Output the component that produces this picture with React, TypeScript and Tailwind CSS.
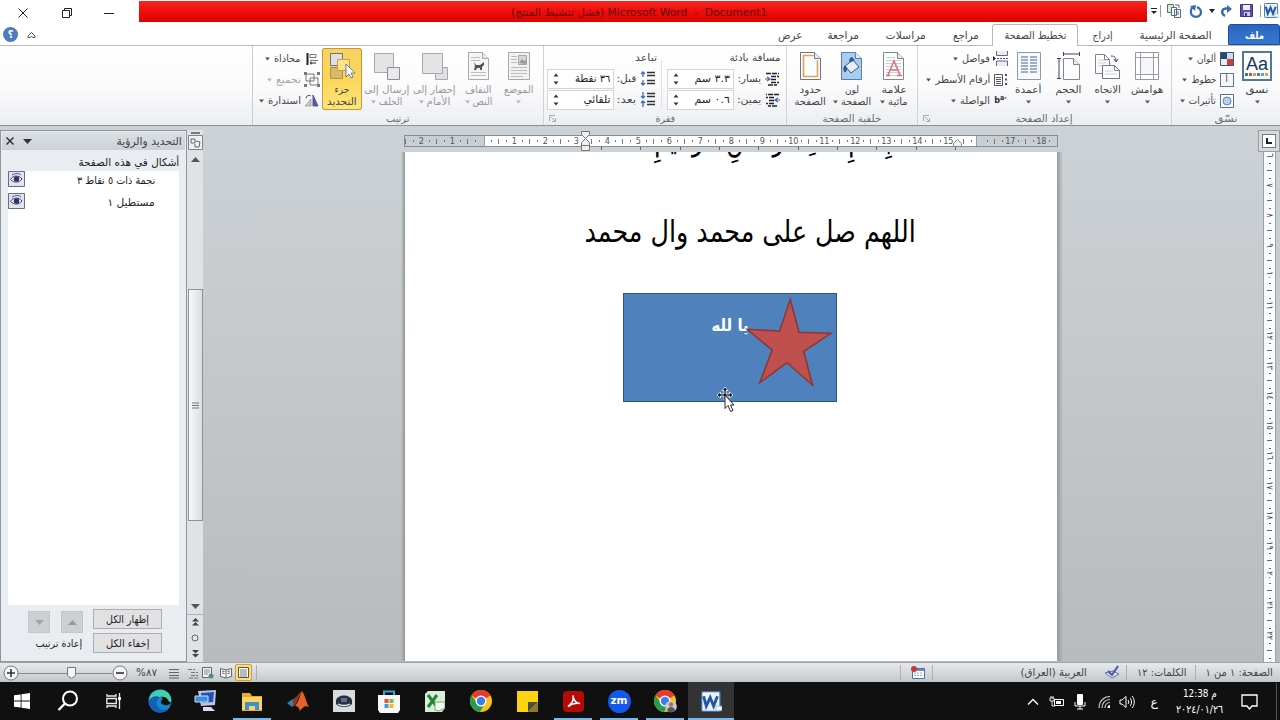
import { useLayoutEffect, useRef, useState, type ReactNode } from "react";
import clsx from "clsx";

// Arabic label squeezed or stretched to a fixed width
function Label({ w, children, className = "", dir = "rtl" }: { w: number; children: ReactNode; className?: string; dir?: string }) {
  const ref = useRef<HTMLSpanElement>(null);
  const [scale, setScale] = useState(1);
  useLayoutEffect(() => {
    if (ref.current) setScale(w / ref.current.offsetWidth);
  }, [w]);
  return (
    <span className={clsx("inline-flex shrink-0 justify-center", className)} style={{ width: w }}>
      <span ref={ref} dir={dir} className="inline-block shrink-0 whitespace-nowrap" style={{ transform: `scaleX(${scale})` }}>
        {children}
      </span>
    </span>
  );
}

function Caret({ dim }: { dim?: boolean }) {
  return (
    <svg width="5" height="4" viewBox="0 0 5 4" className="shrink-0">
      <path d="M0 .5h5L2.5 3.5z" fill={dim ? "#b5b5b8" : "#555"} />
    </svg>
  );
}

function Svg({ w = 16, h = w, box, children, className }: { w?: number; h?: number; box?: string; children: ReactNode; className?: string }) {
  return (
    <svg width={w} height={h} viewBox={box ?? `0 0 ${w} ${h}`} fill="none" className={clsx("shrink-0", className)}>
      {children}
    </svg>
  );
}

/* ---------- title bar ---------- */

function WordLogo({ s = 16 }: { s?: number }) {
  return (
    <Svg w={s} box="0 0 16 16">
      <rect x=".5" y=".5" width="14" height="15" rx="1" fill="#e9f1fb" stroke="#3e6cb0" />
      <path d="M2 4l2 7.500L7 5l2.600 6.500L12.500 4" stroke="#2456a6" strokeWidth="2.200" />
      <path d="M11.500 11.500H16v3.500h-4.500z" fill="#f7faff" stroke="#7d9fd0" strokeWidth=".5" />
    </Svg>
  );
}

function TitleBar() {
  return (
    <div className="flex h-6 shrink-0 items-start bg-white">
      <div className="flex h-6 w-[139px] shrink-0 items-center pt-[2px] pl-[17px]">
        <Svg w={12}><path d="M1.500 1.500l9 9m0-9l-9 9" stroke="#222" /></Svg>
        <Svg w={12} className="ml-[32px]">
          <path d="M1.500 3.500h7v7h-7zM3.500 3V1.500h7v7H9" stroke="#222" />
        </Svg>
        <Svg w={12} className="ml-[30px]"><path d="M1 6.500h10" stroke="#222" /></Svg>
      </div>
      <div className="mt-px flex h-[21px] w-[1008px] shrink-0 items-center justify-center bg-linear-to-b from-[#f6241f] via-[#ee0d0b] to-[#dd0300] pt-[2px] text-[11px] text-[#650b08]">
        <Label w={256} dir="ltr" className="mr-[8px]">(فشل تنشيط المنتج) Microsoft Word &nbsp;-&nbsp; Document1</Label>
      </div>
      <div className="flex h-[21px] flex-1 items-center pl-[3px]">
        <Svg w={8}><path d="M1 1.500h6" stroke="#222" /><path d="M1 4h6L4 7z" fill="#222" /></Svg>
        <div className="ml-[2px] h-3 w-px bg-[#999]" />
        <Svg w={16} className="ml-[5px]">
          <path d="M1.500 1.500h6v8h-6z" fill="#dbe9d8" stroke="#54785a" />
          <path d="M5.500 4.500h5v8h-5zM8.500 6.500h6v8h-6z" fill="#fff" stroke="#586a7e" />
          <path d="M9 2h4v3M10 9h3M10 11h3" stroke="#586a7e" />
        </Svg>
        <Svg w={14} className="ml-[7px]">
          <path d="M4 3C1 5 1 10 4 12c4 2 8 0 8-4 0-3-2-4-4-5" stroke="#3c68b5" strokeWidth="2.200" />
          <path d="M1 2l6-1-1 6z" fill="#3c68b5" />
        </Svg>
        <Svg w={6} h={4} className="ml-[6px]"><path d="M0 0h6L3 4z" fill="#222" /></Svg>
        <Svg w={13} className="ml-[5px]">
          <path d="M5 12C0 9 2 3 9 5" stroke="#3c68b5" strokeWidth="2.400" />
          <path d="M7 1l5 4-5 4z" fill="#3c68b5" />
        </Svg>
        <Svg w={13} className="ml-[7px]">
          <path d="M.5.5h12v12H.5z" fill="#5f50a0" stroke="#41337e" />
          <path d="M3 1h7v5H3z" fill="#eef" /><path d="M4 8h6v4H4z" fill="#cfcbe6" /><path d="M5 9h2v3H5z" fill="#41337e" />
        </Svg>
        <div className="ml-[7px] h-3 w-px bg-[#999]" />
        <div className="ml-[3px]"><WordLogo s={15} /></div>
      </div>
    </div>
  );
}

function TabRow() {
  const tabs = [
    { t: "عرض", w: 24, cell: 49 },
    { t: "مراجعة", w: 31, cell: 57 },
    { t: "مراسلات", w: 40, cell: 67 },
    { t: "مراجع", w: 26, cell: 53 },
  ];
  return (
    <div className="flex h-[22px] shrink-0 border-b border-[#b4b9bf] bg-white text-[10.5px] text-[#444]">
      <div className="flex w-[766px] items-center pl-[3px]">
        <div className="-mt-px flex h-[15px] w-[15px] items-center justify-center rounded-full bg-[#4b7cc1] text-[11px] font-bold text-white">؟</div>
        <Svg w={9} h={8} className="ml-[9px]"><path d="M1 5l3.500-3.500L8 5v1.500H6l-1.500-1-1.500 1H1z" stroke="#555" /></Svg>
      </div>
      {tabs.map((tab) => (
        <div key={tab.t} className="flex shrink-0 items-center justify-center pt-px" style={{ width: tab.cell }}>
          <Label w={tab.w}>{tab.t}</Label>
        </div>
      ))}
      <div className="-mb-px flex w-[86px] items-center justify-center rounded-t-[3px] border border-b-0 border-[#b4b9bf] bg-white">
        <Label w={62}>تخطيط الصفحة</Label>
      </div>
      <div className="flex w-[49px] items-center justify-center pt-px"><Label w={20}>إدراج</Label></div>
      <div className="flex w-[97px] items-center justify-center pt-px"><Label w={72}>الصفحة الرئيسية</Label></div>
      <div className="ml-[4px] flex flex-1 items-center justify-center rounded-t-[3px] border border-[#1d4c9c] bg-linear-to-b from-[#2c66bd] to-[#3577d2] pt-px font-bold text-white">
        <Label w={19}>ملف</Label>
      </div>
    </div>
  );
}

/* ---------- ribbon ---------- */

function Group({ w, title, titleW, children, launcher, last }: { w: number; title: string; titleW: number; children: ReactNode; launcher?: boolean; last?: boolean }) {
  return (
    <div className={clsx("flex shrink-0 flex-col", !last && "border-r border-[#d0d3d7]")} style={{ width: w }}>
      <div className="flex h-[65px] pt-[2px]">{children}</div>
      <div className="flex h-[14px] items-center pt-px text-[10px] text-[#666b72]">
        <div className="w-[16px] pl-[5px]">
          {launcher && <Svg w={7}><path d="M.5 6V.5H6M3 6.500h3.500V3M2 2l4 4" stroke="#999" strokeWidth=".8" /></Svg>}
        </div>
        <div className="flex flex-1 justify-center pr-[16px]"><Label w={titleW}>{title}</Label></div>
      </div>
    </div>
  );
}

function BigButton({ w, icon, l1, w1, l2, w2, caret = true, dim, active }: { w: number; icon: ReactNode; l1: string; w1: number; l2?: string; w2?: number; caret?: boolean; dim?: boolean; active?: boolean }) {
  return (
    <div
      className={clsx(
        "flex h-[62px] shrink-0 flex-col items-center text-[10px] leading-[12px]",
        dim ? "text-[#98989c]" : "text-[#444]",
        active && "rounded-[3px] bg-linear-to-b from-[#f8d263] via-[#fbd65a] to-[#ffe57c] ring-1 ring-[#c29a3c] ring-inset"
      )}
      style={{ width: w }}
    >
      <div className="flex h-[36px] items-center justify-center">{icon}</div>
      <Label w={w1}>{l1}</Label>
      <div className="flex h-3 items-center justify-center gap-[3px]">
        {caret && <Caret dim={dim} />}
        {l2 && <Label w={w2 ?? 20}>{l2}</Label>}
      </div>
    </div>
  );
}

function SmallButton({ t, w, icon, dim }: { t: string; w: number; icon: ReactNode; dim?: boolean }) {
  return (
    <div className={clsx("flex h-[21px] items-center justify-end text-[10px]", dim ? "text-[#a3a3a6]" : "text-[#444]")}>
      <Caret dim={dim} />
      <Label w={w} className="ml-[4px]">{t}</Label>
      <span className="ml-[3px] flex w-[15px] justify-center">{icon}</span>
    </div>
  );
}

function Spin({ value, w }: { value: string; w: number }) {
  return (
    <div className="flex h-[20px] w-[67px] items-center justify-between border border-[#d3d6da] bg-white pr-[3px] pl-[5px] text-[10.5px] text-[#222]">
      <Svg w={6} h={12}><path d="M.5 3.500h5L3 .500zM.500 8.500h5L3 11.500z" fill="#333" /></Svg>
      <Label w={w}>{value}</Label>
    </div>
  );
}

// Sheet of paper with a folded corner, shared by several ribbon icons
function Sheet({ fill = "#fdfdfe", stroke = "#7c8796", children }: { fill?: string; stroke?: string; children?: ReactNode }) {
  return (
    <Svg w={24} h={30}>
      <path d="M1.500 1.500h14l6 6v21h-20z" fill={fill} stroke={stroke} />
      <path d="M15.500 1.500v6h6" fill="#e8ecf2" stroke={stroke} />
      {children}
    </Svg>
  );
}

const grey = "#a7a7ac";

function ArrangeGroup() {
  return (
    <Group w={291} title="ترتيب" titleW={24}>
      <div className="w-[66px]">
        <SmallButton t="محاذاة" w={27} icon={<Svg w={12} h={14}><path d="M1.500 1v12" stroke="#222" strokeWidth="2" /><path d="M4 2.500h6v3H4zM4 8.500h8" stroke="#777" /><path d="M4 11h6M5 9.500v3" stroke="#222" /></Svg>} />
        <SmallButton t="تجميع" w={25} dim icon={<Svg w={16} h={15}><path d="M2 2h8v7H2zM6 6h8v7H6z" stroke="#777" /><path d="M0 0h3v3H0zM13 0h3v3h-3zM0 12h3v3H0zM13 12h3v3h-3z" fill="#777" /></Svg>} />
        <SmallButton t="استدارة" w={33} icon={<Svg w={15} h={13}><path d="M9 1l5 11H9z" fill="#5c5796" stroke="#5c5796" /><path d="M1 12h6V5z" fill="#c5c6ce" stroke="#888" strokeWidth=".6" /><path d="M2 4c1-3 3-3 5-2" stroke="#344" /></Svg>} />
      </div>
      <div className="ml-[3px] flex gap-px">
        <BigButton w={40} active caret={false} l1="جزء" w1={15} l2="التحديد" w2={30} icon={
          <Svg w={26} h={30}>
            <path d="M1.500 2.500h12v12h-12z" fill="#dfdfe5" stroke="#6d7180" />
            <path d="M1.500 16.500h12v11h-12z" fill="#d9b96f" stroke="#b18f4b" />
            <path d="M8.500 8.500h12v11h-12z" fill="#fde28a" stroke="#c9a13e" />
            <path d="M17 13v13l3-3 2 4 2-1-2-4h4z" fill="#fff" stroke="#4d6389" strokeWidth=".8" />
          </Svg>} />
        <BigButton w={47} dim l1="إرسال إلى" w1={45} l2="الخلف" w2={23} icon={
          <Svg w={28} h={30}><path d="M1.500 2.500h19v19h-19z" fill="#e4e3e7" stroke={grey} /><path d="M14.500 16.500h12v12h-12z" fill="#e9e8ec" stroke="#8e8e94" /></Svg>} />
        <BigButton w={47} dim l1="إحضار إلى" w1={43} l2="الأمام" w2={24} icon={
          <Svg w={28} h={30}><path d="M14.500 16.500h12v12h-12z" fill="#e0dfe3" stroke={grey} /><path d="M1.500 2.500h20v20h-20z" fill="#e4e3e7" stroke={grey} /></Svg>} />
        <BigButton w={39} dim l1="التفاف" w1={27} l2="النص" w2={20} icon={
          <Sheet stroke={grey} fill="#f6f6f7">
            <path d="M4 6.500h9M4 9.500h9M4 21.500h15M4 24.500h15" stroke="#bbb" />
            <path d="M7 11l2 3h4l4-3v3l-2 2v3h-2v-2h-3l-1 2H7l1-4z" fill="#555" />
          </Sheet>} />
        <BigButton w={39} dim l1="الموضع" w1={30} icon={
          <Svg w={24} h={30}>
            <path d="M1.500 1.500h21v27h-21z" fill="#f1f1f3" stroke={grey} />
            <path d="M11.500 4.500h8v9h-8z" fill="#d5d5d8" stroke={grey} /><path d="M12 12l3-4 2 2 2-1v4z" fill="#999" />
            <path d="M4 5.500h6M4 8.500h6M4 11.500h6M4 16.500h16M4 19.500h16M4 22.500h16M4 25.500h12" stroke="#bbb" />
          </Svg>} />
      </div>
    </Group>
  );
}

function IndentIcon({ flip }: { flip?: boolean }) {
  return (
    <Svg w={15} h={14}>
      <path d="M1 1.500h13M6 4.500h8M6 7.500h6M6 10.500h8M3 13h9" stroke="#222" strokeWidth="1.500" strokeDasharray="5 1" transform={flip ? "matrix(-1 0 0 1 15 0)" : undefined} />
      <path d={flip ? "M15 7h-4m2-2l-3 2 3 2" : "M0 7h4M2 5l3 2-3 2"} stroke="#3b6cc0" strokeWidth="1.200" />
    </Svg>
  );
}

function SpacingIcon({ inward }: { inward?: boolean }) {
  return (
    <Svg w={15} h={15}>
      <path d="M7 1.500h8M7 4.500h8M7 9.500h8M7 12.500h8" stroke="#333" strokeWidth="1.400" />
      <path d={inward ? "M3 0v6M1 4l2 2 2-2M3 9v6M1 11l2-2 2 2" : "M3 1v5M1 3l2-2 2 2M3 9v5M1 12l2 2 2-2"} stroke="#3b6cc0" strokeWidth="1.300" />
    </Svg>
  );
}

function ParagraphGroup() {
  return (
    <Group w={243} title="فقرة" titleW={20} launcher>
      <div className="flex w-[117px] flex-col text-[10px] text-[#444]">
        <div className="flex h-[20px] items-center justify-end pr-[4px]"><Label w={22}>تباعد</Label></div>
        {[["٣٦ نقطة", "قبل:", 35], ["تلقائي", "بعد:", 27]].map(([v, l, w], i) => (
          <div key={l} className="flex h-[21px] items-center pl-[3px]">
            <Spin value={String(v)} w={Number(w)} />
            <Label w={20} className="ml-[2px]">{l}</Label>
            <span className="ml-[4px]"><SpacingIcon inward={i === 1} /></span>
          </div>
        ))}
      </div>
      <div className="mt-[12px] h-[48px] w-px bg-[#dfe2e5]" />
      <div className="flex flex-1 flex-col text-[10px] text-[#444]">
        <div className="flex h-[20px] items-center justify-end pr-[5px]"><Label w={51}>مسافة بادئة</Label></div>
        {[["٣.٣ سم", "يسار:"], ["٠.٦ سم", "يمين:"]].map(([v, l], i) => (
          <div key={l} className="flex h-[21px] items-center pl-[5px]">
            <Spin value={v} w={35} />
            <Label w={24} className="ml-[3px]">{l}</Label>
            <span className="ml-[4px]"><IndentIcon flip={i === 1} /></span>
          </div>
        ))}
      </div>
    </Group>
  );
}

function BackgroundGroup() {
  return (
    <Group w={131} title="خلفية الصفحة" titleW={59}>
      <div className="flex pl-[3px]">
        <BigButton w={41} caret={false} l1="حدود" w1={22} l2="الصفحة" w2={31} icon={
          <Sheet stroke="#68758a"><path d="M4 4.500h10.500M4.500 4v21.500h14V9" stroke="#e0a25b" strokeWidth="1.600" /></Sheet>} />
        <BigButton w={42} l1="لون" w1={14} l2="الصفحة" w2={30} icon={
          <Sheet fill="#a8cdf0" stroke="#5580b2">
            <path d="M5 15l8-6 6 7-8 6z" fill="#e8edf4" stroke="#46566c" /><path d="M5 15c-2 2-1 5 0 6 2-2 2-4 0-6zM10 11c-1-5 3-6 4-1" fill="#2c5ea8" stroke="#35486a" />
          </Sheet>} />
        <BigButton w={42} l1="علامة" w1={25} l2="مائية" w2={20} icon={
          <Sheet>
            <path d="M4 6.500h9M4 9.500h15M4 12.500h15M4 15.500h15M4 18.500h15M4 21.500h15M4 24.500h15" stroke="#ccd0d8" />
            <path d="M6 24l6-14 6 14M8 19h8M4 24.500h4M15 24.500h5" stroke="#d9767c" strokeWidth="1.600" />
          </Sheet>} />
      </div>
    </Group>
  );
}

function PageSetupGroup() {
  return (
    <Group w={254} title="إعداد الصفحة" titleW={57} launcher>
      <div className="w-[90px]">
        <SmallButton t="فواصل" w={28} icon={<Svg w={15} h={15}><path d="M3.500 0v4.500h11V0M3.500 15v-5h11v5" stroke="#667" fill="#e9ebf5" /><path d="M4 7.500h11" stroke="#4b4b9b" strokeDasharray="2 1" /><path d="M0 5l3 2.500L0 10z" fill="#226" /></Svg>} />
        <SmallButton t="أرقام الأسطر" w={55} icon={<Svg w={15} h={14}><path d="M1.500 1.500h8v11h-8z" fill="#fff" stroke="#556" /><path d="M3 4.500h5M3 6.500h5M3 8.500h5M3 10.500h5" stroke="#557" /><path d="M13 1v3M13 5.500v3M13 10v3" stroke="#3a49b0" strokeWidth="2" strokeDasharray="2 1" /></Svg>} />
        <SmallButton t="الواصلة" w={30} icon={<span className="text-[9px] leading-none font-bold text-[#333]">b<sup className="text-[7px]">a-</sup></span>} />
      </div>
      <div className="flex">
        <BigButton w={41} l1="أعمدة" w1={27} icon={
          <Svg w={24} h={30}><path d="M.5 1.500h23v27H.5z" fill="#f8f9fb" stroke="#8f98a5" /><path d="M4 6h7M4 9h7M4 12h7M4 15h7M4 18h7M4 21h7M13 6h7M13 9h7M13 12h7M13 15h7M13 18h7M13 21h7" stroke="#7b96bf" strokeWidth="1.300" /></Svg>} />
        <BigButton w={39} l1="الحجم" w1={26} icon={
          <Svg w={24} h={30}><path d="M6.500 7.500h10l6 6v15h-16z" fill="#fdfdfe" stroke="#7c8796" /><path d="M16.500 7.500v6h6" stroke="#7c8796" fill="#e8ecf2" /><path d="M6 3h17M6.500 1v4M22.500 1v4M2 7v21M0 7.500h4M0 27.500h4" stroke="#39465a" /></Svg>} />
        <BigButton w={39} l1="الاتجاه" w1={26} icon={
          <Svg w={27} h={30}><path d="M1.500 3.500h9l5 5v14h-14z" fill="#fdfdfe" stroke="#7c8796" /><path d="M4 9h8M4 12h8M4 15h8" stroke="#ccd" /><path d="M8.500 14.500h12l5 5v8h-17z" fill="#fdfdfe" stroke="#6c7786" /><path d="M20.500 14.500v5h5M10.500 3.500v5h5" stroke="#7c8796" /><path d="M11 20h8M11 23h12" stroke="#ccd" /><path d="M17 5c4 0 5 2 5 5m-2-2l2 3 2-3" stroke="#3e4b60" /></Svg>} />
        <BigButton w={40} l1="هوامش" w1={32} icon={
          <Svg w={24} h={30}><path d="M.5 1.500h23v27H.5z" fill="#fff" stroke="#8f98a5" /><path d="M5.500 2v26M18.500 2v26M1 6.500h22M1 23.500h22" stroke="#9a9fa8" /><path d="M6 7h12v16H6z" fill="#f4f6f9" /></Svg>} />
      </div>
    </Group>
  );
}

function ThemesGroup() {
  return (
    <Group w={108} title="نسّق" titleW={23} last>
      <div className="w-[62px]">
        <SmallButton t="ألوان" w={19} icon={<Svg w={14} h={14}><path d="M0 0h7v7H0z" fill="#264a78" /><path d="M7 0h7v7H7z" fill="#c8dbec" /><path d="M0 7h7v7H0z" fill="#e9eef4" /><path d="M7 7h7v7H7z" fill="#c8403a" /><path d="M.5.5h13v13H.5z" stroke="#456" /></Svg>} />
        <SmallButton t="خطوط" w={25} icon={<div className="flex h-[14px] w-[14px] items-center justify-center border border-[#68788d] bg-[#f5f7fa] text-[9px] text-[#333]">أ</div>} />
        <SmallButton t="تأثيرات" w={27} icon={<Svg w={14} h={14}><path d="M.5.5h13v13H.5z" fill="#fff" stroke="#5b6c85" /><circle cx="7" cy="7" r="4" fill="#b8d0f1" stroke="#5b82bd" /></Svg>} />
      </div>
      <div className="ml-[3px]">
        <BigButton w={40} l1="نسق" w1={23} icon={
          <div className="flex h-[30px] w-[30px] flex-col items-center border-2 border-[#547697] bg-[#fafcfe]">
            <span className="h-[20px] font-['Liberation_Sans'] text-[18px] leading-[22px] text-[#17375e]">Aa</span>
            <Svg w={24} h={3}><path d="M0 0h3v3H0z" fill="#4f6bb0" /><path d="M4 0h3v3H4z" fill="#c0504d" /><path d="M8 0h3v3H8z" fill="#9bbb59" /><path d="M12 0h3v3h-3z" fill="#8064a2" /><path d="M16 0h3v3h-3z" fill="#4bacc6" /><path d="M20 0h3v3h-3z" fill="#f79646" /></Svg>
          </div>} />
      </div>
    </Group>
  );
}

/* ---------- workspace ---------- */

function EyeButton() {
  return (
    <Svg w={17} h={16}>
      <path d="M.5.5h16v15H.5z" fill="#e1e4ef" stroke="#686b8a" />
      <path d="M2.500 8.500C5 4 11 4 14 8c-3 4-8 4-11.500.5z" fill="#fff" stroke="#3e3d72" />
      <circle cx="8.500" cy="8" r="2.800" fill="#32306c" />
      <path d="M4 4c3-2 7-2 9 0" stroke="#55548a" />
    </Svg>
  );
}

function SelectionPane() {
  return (
    <aside className="mt-[3px] flex w-[187px] shrink-0 flex-col border border-[#8e959b] bg-[#e9edf1] text-[11px] text-[#222]">
      <div className="m-px flex h-[18px] items-center bg-linear-to-b from-[#dbe0e4] to-[#cbd1d6] pr-[3px] pl-[4px] text-[#444]">
        <Svg w={8}><path d="M.5.5l7 7m0-7l-7 7" stroke="#333" strokeWidth="1.500" /></Svg>
        <Svg w={9} h={5} className="ml-[9px]"><path d="M0 0h9L4.500 5z" fill="#333" /></Svg>
        <Label w={65} className="ml-auto">التحديد والرؤية</Label>
      </div>
      <div className="flex h-[20px] items-center justify-end pt-[2px] pr-[7px]"><Label w={101}>أشكال في هذه الصفحة</Label></div>
      <div className="mx-[7px] flex h-[434px] flex-col bg-white">
        <div className="flex h-[22px] items-start justify-between pr-[24px]">
          <EyeButton />
          <Label w={78} className="text-[10.5px] leading-[18px]">نجمة ذات ٥ نقاط ٣</Label>
        </div>
        <div className="flex h-[22px] items-start justify-between pr-[24px]">
          <EyeButton />
          <Label w={47} className="text-[10.5px] leading-[19px]">مستطيل ١</Label>
        </div>
      </div>
      <div className="flex pt-[4px] pl-[27px]">
        <div className="flex w-[55px] flex-col">
          <div className="flex justify-between pt-[2px]">
            <div className="flex h-[22px] w-[22px] items-center justify-center border border-[#c4c6c9] bg-[#cdcfd2]"><Svg w={9} h={5}><path d="M0 0h9L4.500 5z" fill="#a5a5a8" /></Svg></div>
            <div className="flex h-[22px] w-[22px] items-center justify-center border border-[#c4c6c9] bg-[#cdcfd2]"><Svg w={9} h={5}><path d="M0 5h9L4.500 0z" fill="#98989b" /></Svg></div>
          </div>
          <Label w={47} className="mt-[6px] ml-[7px] text-[10px]">إعادة ترتيب</Label>
        </div>
        <div className="ml-[10px] flex flex-col gap-[4px]">
          {["إظهار الكل", "إخفاء الكل"].map((t) => (
            <div key={t} className="flex h-[20px] w-[69px] items-center justify-center border border-[#adadad] bg-[#e1e1e3] pt-px text-[10.5px]"><Label w={43}>{t}</Label></div>
          ))}
        </div>
      </div>
    </aside>
  );
}

function Scrollbar() {
  return (
    <div className="mt-[3px] flex w-4 shrink-0 flex-col items-center bg-[#dfe3e6]">
      <div className="mt-[2px] h-[2px] w-[9px] bg-[#737a80]" />
      <Svg w={15} h={15} className="mt-px"><path d="M.5.5h14v14H.5z" fill="#eef1f3" stroke="#7e858b" /><path d="M3 4h4v4H3zM8 6l4 1-1 5H7V9" stroke="#555" strokeWidth=".9" /></Svg>
      <Svg w={9} h={5} className="mt-[7px]"><path d="M0 5h9L4.500 0z" fill="#555" /></Svg>
      <div className="mt-[127px] flex h-[232px] w-[15px] items-center justify-center border border-[#8b9298] bg-linear-to-r from-[#f6f8f9] to-[#dbdfe2] pt-[2px]">
        <Svg w={7} h={8}><path d="M0 1h7M0 3.500h7M0 6h7" stroke="#777" /></Svg>
      </div>
      <Svg w={9} h={5} className="mt-[83px]"><path d="M0 0h9L4.500 5z" fill="#555" /></Svg>
      <div className="mt-[5px] h-px w-full bg-[#aab0b5]" />
      <Svg w={7} h={8} className="mt-[3px]"><path d="M0 3.500h7L3.500 0zM0 7.500h7L3.500 4z" fill="#444" /></Svg>
      <Svg w={8} className="mt-[8px]"><circle cx="4" cy="4" r="3" stroke="#666" /></Svg>
      <Svg w={7} h={8} className="mt-[8px]"><path d="M0 0h7L3.500 3.500zM0 4h7L3.500 7.500z" fill="#444" /></Svg>
    </div>
  );
}

function HorizontalRuler() {
  const slots = Array.from({ length: 84 }, (_, i) => i);
  return (
    <div className="relative ml-[201px] h-[25px] w-[654px] pt-[8px]">
      <div className="flex h-[12px] border border-[#878e94] bg-[#c9ced2]">
        <div className="ml-[79px] h-full w-[493px] border-x border-[#9aa0a5] bg-white" />
      </div>
      <div className="absolute top-[8px] left-[-2px] flex h-[12px] items-center">
        {slots.map((i) => {
          const n = (i - 10) / 4;
          return (
            <span key={i} className="flex w-[7.75px] shrink-0 justify-center text-[9px] leading-none text-[#555]">
              {i % 4 === 2 ? (n !== 0 && n !== 16 && <span>{Math.abs(n)}</span>) : <i className={clsx("w-px bg-[#777]", i % 4 === 0 ? "h-[5px]" : "h-[2px]")} />}
            </span>
          );
        })}
      </div>
      <div className="absolute top-[20px] left-[197px] flex">
        {slots.slice(0, 10).map((i) => <i key={i} className="h-[3px] w-[39.350px] border-l border-[#666]" />)}
      </div>
      <Svg w={9} h={21} className="absolute top-[4px] left-[177px]">
        <path d="M.5.5h8v3l-4 4-4-4zM.5 14.500v-3l4-4 4 4v3zM.5 14.500h8v5h-8z" fill="#eef0f2" stroke="#777" />
      </Svg>
      <Svg w={9} h={8} className="absolute top-[12px] left-[549px]"><path d="M.5 7.500v-3l4-4 4 4v3z" fill="#eef0f2" stroke="#888" /></Svg>
    </div>
  );
}

function VerticalRuler() {
  const ar = (n: number) => String(n).replace(/\d/g, (d) => "٠١٢٣٤٥٦٧٨٩"[Number(d)]);
  return (
    <div className="mt-[3px] flex w-[22px] shrink-0 flex-col">
      <div className="flex h-[22px] w-full shrink-0 items-center justify-center border border-[#989ea3] bg-[#d5d9dc]">
        <div className="flex h-[14px] w-[14px] items-center justify-center border border-[#777] bg-white"><Svg w={6}><path d="M1 0v5h5" stroke="#222" strokeWidth="2" /></Svg></div>
      </div>
      <div className="ml-[5px] flex h-[510px] w-[13px] flex-col overflow-hidden border-x border-[#9ba1a6] bg-[#fafbfc]">
        {Array.from({ length: 68 }, (_, i) => (
          <span key={i} className="flex h-[7.500px] shrink-0 items-center justify-center">
            {i % 4 === 0
              ? <span className="rotate-90 text-[9px] leading-none text-[#444]">{ar(6 + i / 4)}</span>
              : <i className={clsx("h-px bg-[#666]", i % 4 === 2 ? "w-[5px]" : "w-[2px]")} />}
          </span>
        ))}
      </div>
    </div>
  );
}

function Page() {
  return (
    <div className="relative ml-[202px] h-[509px] w-[652px] overflow-hidden bg-white text-black">
      <div className="absolute top-[-37px] left-[250px] h-[48px] text-[31px] leading-[48px]"><Label w={237}>بِسمِ اللهِ الرحمنِ الرحيمِ</Label></div>
      <div className="flex justify-center pt-[56px] pl-[39px] text-[30px] leading-[48px]">
        <Label w={331}>اللهم صل على محمد وال محمد</Label>
      </div>
      <div className="absolute top-[141px] left-[218px] h-[109px] w-[214px] border-[1.500px] border-[#2f5587] bg-[#4f81bd]">
        <div className="absolute top-[19px] left-[88px] text-[17px] leading-[24px] font-bold text-white"><Label w={37}>يا لله</Label></div>
      </div>
      <Svg w={90} h={94} box="745 295 90 94" className="absolute top-[143px] left-[340px]">
        <path d="M790.300 299.500l8.700 32.800 32 1-27.300 18 8.800 33.700-25.500-22.300-27.200 19.800 12.300-32.500-25-20.700 32.500 1.700z" fill="#c0504d" stroke="#8c3836" strokeWidth="1.600" />
      </Svg>
      <Svg w={18} h={26} className="absolute top-[234px] left-[311px]">
        <path d="M9 1l3 3.500h-2v3.500h3.500V6L17 9l-3.500 3v-2H10v4H8v-4H4.500v2L1 9l3.500-3v2H8V4.500H6z" fill="#111" stroke="#fff" strokeWidth=".8" />
        <path d="M9 9v13.500l3-3 2.500 6 2.500-1-2.500-5.500H18z" fill="#fff" stroke="#111" strokeWidth=".9" />
      </Svg>
    </div>
  );
}

function StatusBar() {
  const sep = "h-[15px] w-px shrink-0 bg-[#a9aeb3]";
  return (
    <div className="flex h-[20px] shrink-0 items-center border-t border-[#9ca2a7] bg-linear-to-b from-[#e7eaec] to-[#c3c8cc] text-[10.5px] text-[#444]">
      <Svg w={160} h={18} className="-mr-[26px] ml-[2px]">
        <path d="M16 9.500h94" stroke="#888" />
        <circle cx="9" cy="9" r="7" fill="#f5f6f7" stroke="#777" /><path d="M5 9h8M9 5v8" stroke="#333" strokeWidth="1.600" />
        <circle cx="118" cy="9" r="7" fill="#f5f6f7" stroke="#777" /><path d="M114 9h8" stroke="#333" strokeWidth="1.600" />
        <path d="M65.500 3.500h8v8l-4 3-4-3z" fill="#f3f5f6" stroke="#777" />
      </Svg>
      <Label w={21}>٨٧%</Label>
      <Svg w={12} className="ml-[11px]"><path d="M1 2.500h10M1 5.500h10M1 8.500h10M1 11h10" stroke="#666" /></Svg>
      <Svg w={10} h={12} className="ml-[8px]"><path d="M0 2.500h7M3 5.500h7M3 8.500h7M1 11h9" stroke="#777" strokeDasharray="4 1" /></Svg>
      <Svg w={12} className="ml-[4px]"><path d="M.5.5h9v10h-9z" fill="#f5f5f5" stroke="#666" /><path d="M2 3h6M2 5h6M2 7h4" stroke="#888" /><circle cx="9" cy="9" r="2.500" fill="#4a8c91" /></Svg>
      <Svg w={12} className="ml-[6px]"><path d="M.5 1.500L6 3l5.500-1.500v8L6 11 .5 9.500zM6 3v8M2 4l2.500.5M2 6l2.500.5M7.500 4.500L10 4M7.500 6.500L10 6" stroke="#666" fill="#f7f7f7" /></Svg>
      <div className="ml-[3px] flex h-[17px] w-[17px] items-center justify-center rounded-[2px] border border-[#c7a23c] bg-[#fbdd78]">
        <Svg w={11}><path d="M.5.5h10v10H.5z" fill="#fff" stroke="#555" /><path d="M2 3h7M2 5h7M2 7h7M2 9h7" stroke="#777" /></Svg>
      </div>
      <div className={`${sep} ml-[4px]`} />
      <div className={`${sep} ml-auto`} />
      <Svg w={14} h={13} className="ml-[10px]"><path d="M1.500 2.500h12v10h-12z" fill="#fff" stroke="#5470a8" /><path d="M2 3h11v2H2z" fill="#6d8cc6" /><path d="M3 7h9M3 9.500h9" stroke="#8fa6d0" strokeDasharray="2 1" /><circle cx="3" cy="3" r="3" fill="#c43c38" /></Svg>
      <div className={`${sep} ml-[7px]`} />
      <Label w={66} className="ml-[88px]">العربية (العراق)</Label>
      <Svg w={16} h={15} className="ml-[17px]"><path d="M1 8l8-2 6 3-7 4z" fill="#e3e6f2" stroke="#6370a0" /><path d="M4 6l4 4 6-9" stroke="#4858a8" strokeWidth="2" /></Svg>
      <div className={`${sep} ml-[6px]`} />
      <Label w={49} className="ml-[10px]">الكلمات: ١٢</Label>
      <div className={`${sep} ml-[9px]`} />
      <Label w={67} className="mr-[7px] ml-[10px]">الصفحة: ١ من ١</Label>
    </div>
  );
}

/* ---------- taskbar ---------- */

function ChromeIcon({ badge }: { badge?: boolean }) {
  return (
    <Svg w={24} box="0 0 24 24">
      <circle cx="12" cy="12" r="11" fill="#fbc116" />
      <path d="M12 12L2.500 6.500A11 11 0 0 1 21.500 6.500z" fill="#e33b2e" /><path d="M2.500 6.500A11 11 0 0 0 11 23l5-9H8z" fill="#269b4c" />
      <circle cx="12" cy="12" r="5.500" fill="#fff" /><circle cx="12" cy="12" r="4.200" fill="#3b7ded" />
      {badge && <><circle cx="18" cy="17.500" r="5.800" fill="#c9ccd0" /><circle cx="18" cy="15.500" r="2.200" fill="#94796c" /><path d="M14 21c1-4 7-4 8 0-2 3-6 3-8 0z" fill="#55585f" /></>}
    </Svg>
  );
}

const apps: { id: string; icon: ReactNode; open?: boolean; active?: boolean }[] = [
  { id: "start", icon: <Svg w={16}><path d="M0 2.300L6.700 1.400v6.200H0zM7.500 1.300L16 0v7.600H7.500zM0 8.400h6.700v6.200L0 13.700zM7.500 8.400H16V16l-8.500-1.300z" fill="#fff" /></Svg> },
  { id: "search", icon: <Svg w={22}><circle cx="13" cy="8.500" r="7" stroke="#fff" strokeWidth="2" /><path d="M8 13.500L1.500 20" stroke="#fff" strokeWidth="2.400" /></Svg> },
  { id: "tasks", icon: <Svg w={16}><path d="M1 1v2h9V1M1 15v-2h9v2M.8 5.500h9.500v5H.8zM13.500 0v16" stroke="#eee" strokeWidth="1.300" /><path d="M12 4h3v3h-3z" fill="#fff" /></Svg> },
  { id: "edge", icon: <Svg w={24} box="0 0 24 24"><circle cx="12" cy="12" r="11.500" fill="#1686d0" /><path d="M2 7C6-1 20-2 23 9c1 6-5 8-9 6 2-2 2-7-3-7C7 7 3 9 1 12z" fill="#43cfae" /><path d="M1 12c2-5 8-6 11-3-5 1-5 10 3 12 3 0 6-2 7-3-5 8-20 8-21-6z" fill="#1360b6" /><path d="M14 15c-2-1-1-3 0-4 1-2 0-3-2-3 9-2 8 7 11 5-1 4-6 4-9 2z" fill="#101010" /></Svg> },
  { id: "remote", icon: <Svg w={24} h={24}><path d="M4 2l18-1-1 15-14 1z" fill="#b9c6e3" /><path d="M7 4l13-1-1 10-11 1z" fill="#2451b6" /><path d="M1 7h13v6H1z" fill="#3b8de0" stroke="#c9ddf5" /><path d="M9 18h8l4 4H9z" fill="#dcdde3" /></Svg> },
  { id: "files", open: true, icon: <Svg w={22} h={19}><path d="M1 1h8l2 3h10v15H1z" fill="#e9a92b" /><path d="M1 5h20v13H1z" fill="#fcd462" /><path d="M4 18v-8h14v8h-4v-4H8v4z" fill="#3f90cf" /></Svg> },
  { id: "matlab", icon: <Svg w={22} h={20}><path d="M0 12l6-4 3 3-4 5z" fill="#3d7fb5" /><path d="M6 8c4-1 5-6 9-8l-6 13-3 3z" fill="#8b3a24" /><path d="M15 0c3 4 4 11 7 16-4-2-6 0-9 4-1-4-3-5-5-5 4-4 5-11 7-15z" fill="#e6622a" /></Svg> },
  { id: "drone", icon: <Svg w={22} h={22}><path d="M0 0h22v22H0z" fill="#d8dade" /><path d="M3 10c2-6 14-6 16 0v4c-3 4-13 4-16 0z" fill="#26303f" /><path d="M8 8h6v4H8z" fill="#5b6f8c" /><path d="M5 14c3 2 9 2 12 0" stroke="#e5e7ea" strokeWidth="1.500" /></Svg> },
  { id: "store", icon: <Svg w={22} h={23}><path d="M6 6V1.500h10V6" stroke="#35a4d8" strokeWidth="2" /><path d="M0 5h22v15l-2 3H2l-2-3z" fill="#f6f6f6" /><path d="M6.500 9h4v4h-4z" fill="#e4532a" /><path d="M11.500 9h4v4h-4z" fill="#7eb83f" /><path d="M6.500 14h4v4h-4z" fill="#33a2dc" /><path d="M11.500 14h4v4h-4z" fill="#f7b72a" /></Svg> },
  { id: "excel", icon: <Svg w={20} h={21}><path d="M3 0h17v17l-3 4H0V3z" fill="#d9eed8" /><path d="M3 4l9 12M12 4L3 16" stroke="#27833a" strokeWidth="3" /><path d="M10 11h10v6l-6 3-4-1z" fill="#f2faf1" stroke="#73b178" /></Svg> },
  { id: "chrome", icon: <ChromeIcon /> },
  { id: "notes", icon: <Svg w={21}><path d="M0 0h21v21H0z" fill="#fbd40f" /><path d="M11 11h10L11 21z" fill="#4c4c45" /><path d="M21 11v10H11z" fill="#8c7a22" /></Svg> },
  { id: "acrobat", open: true, icon: <Svg w={21}><rect width="21" height="21" rx="4" fill="#b30b05" /><path d="M10 4.500c1 3 0 7-5 11M10 4.500c0 4 3 8 7 8-4-1-8 0-12 3" stroke="#fff" strokeWidth="1.600" /></Svg> },
  { id: "zoom", open: true, icon: <div className="flex h-[23px] w-[23px] items-center justify-center rounded-full bg-[#1558ee] pb-[2px] text-[11px] font-bold text-white"><Label w={17} dir="ltr">zm</Label></div> },
  { id: "chrome-user", open: true, icon: <ChromeIcon badge /> },
  { id: "word", open: true, active: true, icon: <WordLogo s={21} /> },
];

function Taskbar() {
  return (
    <div className="flex h-[38px] shrink-0 bg-[#101010] text-white">
      <div className="-ml-px flex">
        {apps.map((a) => (
          <div key={a.id} className={clsx("flex w-[45.950px] shrink-0 flex-col items-center", a.active && "bg-[#333]")}>
            <div className="flex h-[36px] items-center pt-[2px]">{a.icon}</div>
            {a.open && <div className={clsx("h-[2px] bg-[#76b9ed]", a.active ? "w-full" : "w-[38px]")} />}
          </div>
        ))}
      </div>
      <div className="ml-auto flex items-center pt-px">
        <Svg w={12} h={8}><path d="M1 6.500l5-5 5 5" stroke="#fff" strokeWidth="1.300" /></Svg>
        <Svg w={16} h={12} className="ml-[10px]"><path d="M5.500 3.500h9v6h-9z" stroke="#fff" /><path d="M7 5h5v3H7z" fill="#fff" /><path d="M1 2h4v3H1zM2 0v2M4 0v2M3 5v5h3" stroke="#fff" strokeWidth=".9" /></Svg>
        <Svg w={12} h={16} className="ml-[9px]"><rect x="3" y="0" width="6" height="11" rx="1" fill="#fff" /><path d="M1 8v4h10V8M6 12v3M3 15h6" stroke="#fff" /></Svg>
        <Svg w={13} h={14} className="ml-[12px]"><path d="M1 13C1 6 6 1.500 12 1.500M4 13c0-5 3-8.500 8-8.500M7 13c0-3 2-5.500 5-5.500" stroke="#ccc" strokeWidth="1.200" /><path d="M9.500 13c0-2 1-3 2.500-3v3z" fill="#fff" /></Svg>
        <Svg w={16} h={14} className="ml-[8px]"><path d="M1 5h2l4-3.500v11L3 9H1zM9 5c1 1 1 3 0 4M11 3c2 2 2 6 0 8M13 1c3 3 3 9 0 12" stroke="#fff" /></Svg>
        <Label w={7} className="ml-[16px] text-[12px]">ع</Label>
        <div className="ml-[18px] flex w-[48px] flex-col items-center text-[11px] leading-[16px]">
          <Label w={34} dir="ltr">12:38 م</Label>
          <Label w={47}>٢٠٢٤/٠١/٢٦</Label>
        </div>
        <Svg w={17} h={16} className="ml-[17px]"><path d="M1 1h15v11h-5l-2.500 3L6 12H1z" stroke="#fff" strokeWidth="1.300" /></Svg>
        <div className="mr-[3px] ml-[18px] h-[38px] w-px bg-[#555]" />
      </div>
    </div>
  );
}

export default function App() {
  return (
    <div className="flex h-[720px] w-[1280px] flex-col overflow-hidden bg-white font-['DejaVu_Sans_Condensed','DejaVu_Sans',sans-serif] leading-none">
      <TitleBar />
      <TabRow />
      <div className="flex h-[80px] shrink-0 border-b border-[#8b9197] bg-linear-to-b from-white via-[#fbfbfc] to-[#eceef1]">
        <div className="w-[253px] shrink-0 border-r border-[#c9ccd0]" />
        <ArrangeGroup />
        <ParagraphGroup />
        <BackgroundGroup />
        <PageSetupGroup />
        <ThemesGroup />
      </div>
      <div className="flex h-[536px] shrink-0 bg-linear-to-b from-[#cdd2d6] via-[#c3c7ca] to-[#b7bbbe] pt-px">
        <SelectionPane />
        <Scrollbar />
        <div className="flex w-[1055px] flex-col">
          <HorizontalRuler />
          <div className="relative">
            <Page />
            <div className="absolute top-0 left-[198px] h-full w-[4px] bg-linear-to-l from-[#8e9396] to-transparent" />
            <div className="absolute top-0 left-[854px] h-full w-[6px] bg-linear-to-r from-[#93989b] to-transparent" />
          </div>
        </div>
        <VerticalRuler />
      </div>
      <StatusBar />
      <Taskbar />
    </div>
  );
}
